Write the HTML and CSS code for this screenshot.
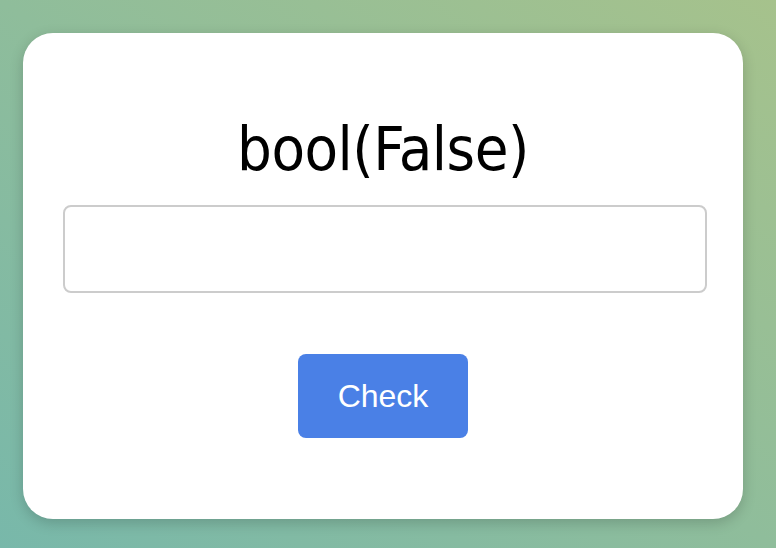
FILE: index.html
```html
<!DOCTYPE html>
<html>
<head>
<meta charset="utf-8">
<link rel="stylesheet" href="styles.css">
</head>
<body>
<div class="card">
  <h1 class="title">bool(False)</h1>
  <input class="answer" type="text">
  <button class="check">Check</button>
</div>
</body>
</html>
```
FILE: styles.css
```css
html, body {
  margin: 0;
  height: 100%;
}
body {
  background: linear-gradient(to top right, #78b8aa, #a6c28c);
  padding: 33px 33px 29px 23px;
  box-sizing: border-box;
  width: 776px;
  height: 548px;
}
.card {
  width: 720px;
  height: 486px;
  box-sizing: border-box;
  background: #fff;
  border-radius: 30px;
  box-shadow: 0 4px 14px rgba(0, 0, 0, 0.18);
  padding: 0 40px;
  display: flex;
  flex-direction: column;
  align-items: center;
}
.title {
  margin: 84px 0 0;
  font-family: "DejaVu Sans Condensed", "DejaVu Sans", sans-serif;
  font-weight: normal;
  font-size: 61px;
  line-height: 64px;
  color: #000;
  letter-spacing: -0.5px;
}
.answer {
  align-self: flex-start;
  margin-top: 24px;
  width: 644px;
  height: 88px;
  box-sizing: border-box;
  border: 2px solid #cccccc;
  border-radius: 8px;
  outline: none;
}
.check {
  margin-top: 61px;
  width: 170px;
  height: 84px;
  border: none;
  border-radius: 8px;
  background: #4a80e6;
  color: #fff;
  font-family: "Liberation Sans", sans-serif;
  font-size: 32px;
}
```
